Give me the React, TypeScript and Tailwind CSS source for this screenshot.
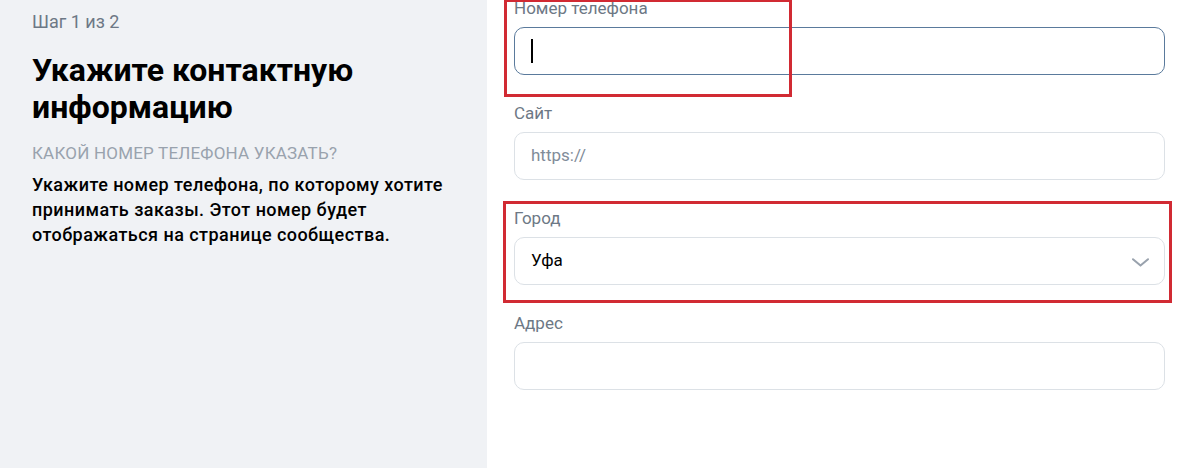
import type { ReactNode } from 'react';

const font = { fontFamily: 'Roboto, "Noto Sans", sans-serif' };

export default function App() {
  return (
    <div
      className="relative flex h-[468px] w-[1180px] overflow-hidden bg-white"
      style={font}
    >
      <aside className="w-[487px] shrink-0 bg-[#f0f2f5] pt-[12px] pr-6 pl-8">
        <p className="text-[18px] leading-5 text-[#6d7885]">Шаг 1 из 2</p>
        <h1 className="mt-5 text-[32px] leading-[37px] font-bold text-black">
          Укажите контактную информацию
        </h1>
        <p className="mt-[17px] text-[17px] leading-5 tracking-[0.2px] text-[#99a2ad] uppercase">
          Какой номер телефона указать?
        </p>
        <p className="mt-[9px] text-[18px] leading-[25px] tracking-[0.45px] font-medium text-black">
          Укажите номер телефона, по которому хотите принимать заказы. Этот
          номер будет отображаться на странице сообщества.
        </p>
      </aside>

      <main className="flex-1 pr-[15px] pl-[27px]">
        <div className="-mt-[2px] flex flex-col">
          <Field label="Номер телефона">
            <div className="flex h-12 items-center rounded-[10px] border border-[#5a7a9c] bg-white px-4">
              <span className="h-6 w-[2px] bg-black" />
            </div>
          </Field>
          <Field label="Сайт">
            <Box>
              <span className="text-[#818c99]">https://</span>
            </Box>
          </Field>
          <Field label="Город">
            <Box>
              <span className="flex-1 text-black">Уфа</span>
              <svg
                width="17"
                height="9"
                viewBox="0 0 17 9"
                fill="none"
                stroke="#99a2ad"
                strokeWidth="2"
                strokeLinecap="round"
                strokeLinejoin="round"
                className="mt-[2px] -mr-[1px]"
              >
                <path d="M1 1.2 8.5 7.6 16 1.2" />
              </svg>
            </Box>
          </Field>
          <Field label="Адрес">
            <Box />
          </Field>
        </div>
      </main>

      {/* annotation frames */}
      <div className="pointer-events-none absolute top-[-1px] left-[504px] h-[98px] w-[288px] border-[3px] border-[#d12a33]" />
      <div className="pointer-events-none absolute top-[201px] left-[503px] h-[102px] w-[669px] border-[3px] border-[#d12a33]" />
    </div>
  );
}

function Field({ label, children }: { label: string; children: ReactNode }) {
  return (
    <div className="mb-[28px]">
      <label className="mb-[9px] block text-[17px] leading-5 text-[#6d7885]">
        {label}
      </label>
      {children}
    </div>
  );
}

function Box({ children }: { children?: ReactNode }) {
  return (
    <div className="flex h-12 items-center rounded-[10px] border border-[#dce1e6] bg-white px-4 text-[17px]">
      {children}
    </div>
  );
}
